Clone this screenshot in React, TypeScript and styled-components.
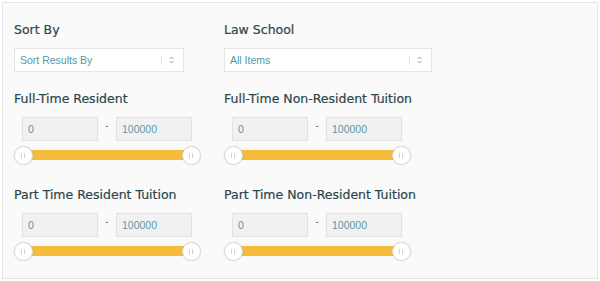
import React from "react";
import styled, { createGlobalStyle } from "styled-components";

const Global = createGlobalStyle`
  html, body { margin: 0; padding: 0; background: #ffffff; }
  * { box-sizing: border-box; }
`;

const Panel = styled.div`
  margin: 2px;
  width: 596px;
  height: 277px;
  background: #fafafa;
  border: 1px solid #e4e4e4;
  padding: 19px 11px;
`;

const Grid = styled.div`
  display: grid;
  grid-template-columns: 210px 1fr;
  row-gap: 19px;
`;

const Group = styled.div`
  display: flex;
  flex-direction: column;
`;

const Label = styled.div`
  font-family: "DejaVu Sans", sans-serif;
  font-size: 12.5px;
  line-height: 16px;
  color: #2a464c;
  -webkit-text-stroke: 0.2px #2a464c;
  margin-bottom: 10px;
  white-space: nowrap;
`;

const SelectBox = styled.div<{ $w: number }>`
  position: relative;
  width: ${(p) => p.$w}px;
  height: 24px;
  background: #ffffff;
  border: 1px solid #e6e6e6;
  display: flex;
  align-items: center;
  padding-left: 5px;
  font-family: "Liberation Sans", Arial, sans-serif;
  font-size: 10.5px;
  color: #5199a5;
`;

const SelectText = styled.span`
  flex: 1;
`;

const Sep = styled.span`
  width: 1px;
  height: 9px;
  background: #e2e2e2;
  margin-right: 7px;
`;

const Arrows = styled.svg`
  width: 5px;
  height: 8px;
  margin-right: 9px;
`;

const RangeRow = styled.div`
  display: flex;
  align-items: center;
  margin-left: 8px;
`;

const NumInput = styled.div`
  width: 76px;
  height: 24px;
  background: #f1f1f1;
  border: 1px solid #e2e2e2;
  display: flex;
  align-items: center;
  padding-left: 5px;
  font-family: "Liberation Sans", Arial, sans-serif;
  font-size: 10.5px;
  color: #5a9aa6;
`;

const Dash = styled.span`
  width: 18px;
  text-align: center;
  font-family: "Liberation Sans", Arial, sans-serif;
  font-size: 10px;
  color: #777;
  margin-top: -7px;
`;

const Slider = styled.div`
  position: relative;
  margin: 5px 0 4px 8px;
  width: 170px;
  height: 18px;
`;

const Track = styled.div`
  position: absolute;
  left: 1px;
  right: 1px;
  top: 4px;
  height: 10px;
  background: #f5bb3b;
`;

const Handle = styled.div<{ $pos: "l" | "r" }>`
  position: absolute;
  top: -0.5px;
  ${(p) => (p.$pos === "l" ? "left: -8.5px;" : "right: -8.5px;")}
  width: 19px;
  height: 19px;
  border-radius: 50%;
  background: #ffffff;
  border: 1px solid #d9d9d9;
  box-shadow: 0 0 2px rgba(0, 0, 0, 0.1);
  display: flex;
  align-items: center;
  justify-content: center;
  gap: 2px;
  &::before,
  &::after {
    content: "";
    width: 1px;
    height: 5px;
    background: #d2d2d2;
  }
`;

function Select({ text, width }: { text: string; width: number }) {
  return (
    <SelectBox $w={width}>
      <SelectText>{text}</SelectText>
      <Sep />
      <Arrows viewBox="0 0 5 8">
        <path d="M0.5 3 L2.5 1 L4.5 3" fill="none" stroke="#999" strokeWidth="0.9" />
        <path d="M0.5 5 L2.5 7 L4.5 5" fill="none" stroke="#999" strokeWidth="0.9" />
      </Arrows>
    </SelectBox>
  );
}

function Range({ label }: { label: string }) {
  return (
    <Group>
      <Label>{label}</Label>
      <RangeRow>
        <NumInput>0</NumInput>
        <Dash>-</Dash>
        <NumInput>100000</NumInput>
      </RangeRow>
      <Slider>
        <Track />
        <Handle $pos="l" />
        <Handle $pos="r" />
      </Slider>
    </Group>
  );
}

export default function App() {
  return (
    <>
      <Global />
      <Panel>
        <Grid>
          <Group>
            <Label>Sort By</Label>
            <Select text="Sort Results By" width={170} />
          </Group>
          <Group>
            <Label>Law School</Label>
            <Select text="All Items" width={208} />
          </Group>
          <Range label="Full-Time Resident" />
          <Range label="Full-Time Non-Resident Tuition" />
          <Range label="Part Time Resident Tuition" />
          <Range label="Part Time Non-Resident Tuition" />
        </Grid>
      </Panel>
    </>
  );
}
